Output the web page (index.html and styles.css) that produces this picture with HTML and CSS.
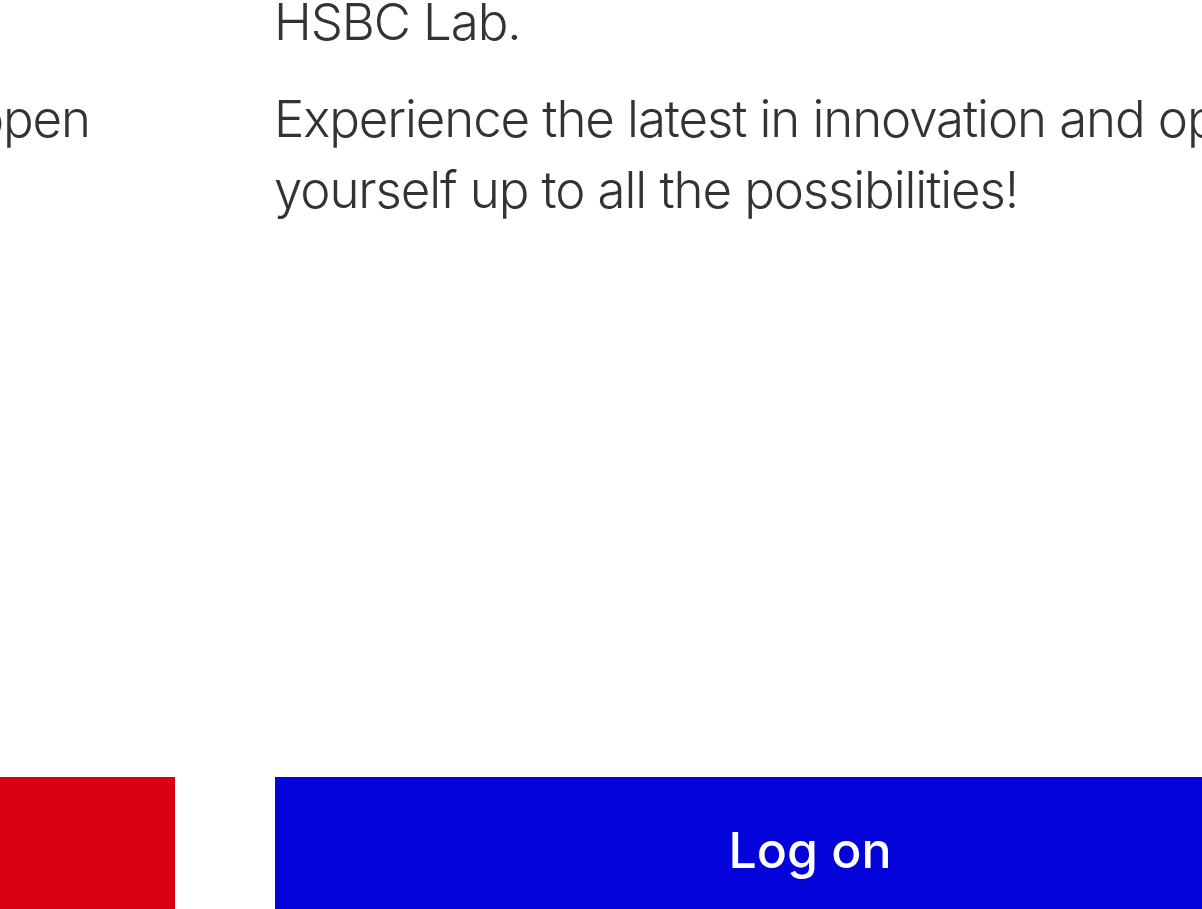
FILE: index.html
```html
<!DOCTYPE html>
<html lang="en">
<head>
<meta charset="utf-8">
<title>HSBC Lab</title>
<link rel="stylesheet" href="styles.css">
</head>
<body>
<main class="page">
  <section class="carousel">
    <div class="prev-wrap">
      <div class="slide">
        <p class="para">HSBC Lab.</p>
        <p class="para">Experience the latest in innovation and open<br>yourself up to all the possibilities!</p>
      </div>
    </div>
    <div class="slide">
      <p class="para">HSBC Lab.</p>
      <p class="para">Experience the latest in innovation and open<br>yourself up to all the possibilities!</p>
    </div>
  </section>
  <div class="actions">
    <button class="btn btn-register" type="button">Register</button>
    <button class="btn btn-logon" type="button">Log on</button>
  </div>
</main>
</body>
</html>
```
FILE: styles.css
```css
html, body {
  margin: 0;
  padding: 0;
  background: #ffffff;
}
body {
  width: 1202px;
  height: 909px;
  overflow: hidden;
  font-family: "Inter", "Liberation Sans", sans-serif;
  color: #333333;
}
.page {
  display: flex;
  flex-direction: column;
  height: 923px;
}
.carousel {
  display: flex;
  align-items: flex-start;
  margin-top: -14px;
}
.prev-wrap {
  flex: 0 0 274px;
  min-width: 0;
  display: flex;
  justify-content: flex-end;
  padding-right: 184px;
  box-sizing: border-box;
}
.slide {
  flex: none;
  white-space: nowrap;
}
.para {
  margin: 0 0 26px;
  font-size: 51px;
  line-height: 71px;
  font-weight: 300;
  letter-spacing: -1.1px;
}
.para:last-child {
  margin-bottom: 0;
}
.actions {
  margin-top: auto;
  display: flex;
  gap: 100px;
  margin-left: -895px;
}
.btn {
  flex: 0 0 1070px;
  height: 146px;
  border: 0;
  padding: 0;
  font-family: "Inter", "Liberation Sans", sans-serif;
  font-size: 50px;
  font-weight: 500;
  color: #ffffff;
}
.btn-register {
  background: #db0011;
}
.btn-logon {
  background: #0404da;
}
```
